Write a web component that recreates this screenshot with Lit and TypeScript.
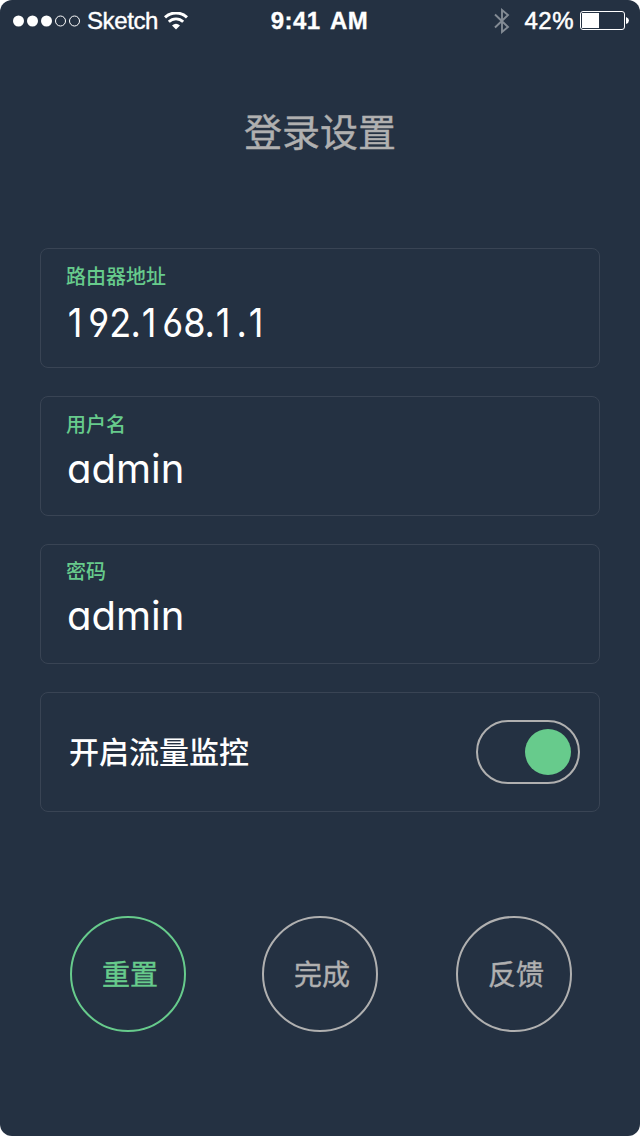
import { LitElement, html, css, svg } from "lit";
import { customElement, property, state } from "lit/decorators.js";
import { classMap } from "lit/directives/class-map.js";

@customElement("status-bar")
class StatusBar extends LitElement {
  static styles = css`
    :host {
      display: grid;
      grid-template-columns: 1fr auto 1fr;
      height: 41px;
      align-items: center;
      box-sizing: border-box;
      padding: 0 11px 0 12px;
      color: #fff;
      font: 24px/40px "Liberation Sans", Arial, sans-serif;
    }
    svg { display: block; flex: none; }
    .side { display: flex; align-items: center; }
    .right { justify-content: flex-end; }
    .carrier { margin-left: 6px; letter-spacing: -0.4px; -webkit-text-stroke: 0.4px #fff; }
    .wifi { margin-left: 6px; }
    .time { padding-right: 2px; font-weight: 700; letter-spacing: 0.5px; word-spacing: 3px; -webkit-text-stroke: 0.3px #fff; }
    .level { margin: 0 6px 0 14px; letter-spacing: 0.5px; -webkit-text-stroke: 0.5px #fff; }
  `;
  render() {
    return html`
      <div class="side">
        <svg width="69" height="12" viewBox="0 0 69 12">
          ${[0, 1, 2, 3, 4].map((i) =>
            i < 3
              ? svg`<circle cx=${6.5 + i * 14} cy="6" r="5.5" fill="#fff" />`
              : svg`<circle cx=${6.5 + i * 14} cy="6" r="5" fill="none" stroke="#fff" />`
          )}
        </svg>
        <span class="carrier">Sketch</span>
        <svg class="wifi" width="24" height="18" viewBox="0 0 24 18">
          <path d="M1 5.4 A16 16 0 0 1 23 5.4" fill="none" stroke="#fff" stroke-width="3" />
          <path d="M4.8 9.8 A10.2 10.2 0 0 1 19.2 9.8" fill="none" stroke="#fff" stroke-width="2.8" />
          <path d="M8 13.4 Q12 10 16 13.4 L12 17.5Z" fill="#fff" />
        </svg>
      </div>
      <span class="time">9:41 AM</span>
      <div class="side right">
        <svg width="16" height="26" viewBox="0 0 16 26">
          <path d="M1 6.5 L14 19 L8 24 V2 L14 7 L1 19.5" fill="none" stroke="#838b94" stroke-width="1.9" />
        </svg>
        <span class="level">42%</span>
        <svg width="49" height="19" viewBox="0 0 49 19">
          <rect x="0.5" y="0.5" width="44" height="18" rx="2.5" fill="none" stroke="#fff" />
          <rect x="2" y="2" width="17" height="15" fill="#fff" />
          <path d="M46 6 Q49 7.2 49 9.5 T46 13Z" fill="#fff" />
        </svg>
      </div>
    `;
  }
}

@customElement("setting-field")
class SettingField extends LitElement {
  @property() label = "";
  @property() value = "";
  static styles = css`
    :host {
      display: flex;
      flex-direction: column;
      box-sizing: border-box;
      height: 120px;
      padding: 12px 25px 0;
      border: 1px solid #394454;
      border-radius: 8px;
    }
    :host(.raised) { padding-top: 11px; }
    .label {
      font: 500 20px/30px "Noto Sans CJK SC", sans-serif;
      color: #67cb8c;
    }
    .value {
      margin: 6px 0 0 1px;
      font: 400 40px/48px Inter, "Noto Sans CJK SC", sans-serif;
      font-feature-settings: "cv11";
      color: #fff;
    }
    .numeric {
      display: flex;
      margin: 8px 0 0 1px;
      font-feature-settings: "cv03", "cv04", "ss01";
    }
    .cell { display: flex; flex: none; justify-content: center; width: 21.1px; }
    .cell span { transform: scaleX(0.9); }
    .dot { width: 11px; }
    .one { box-sizing: border-box; padding-right: 5px; }
  `;
  render() {
    const numeric = /^[\d.]+$/.test(this.value);
    const text = numeric
      ? [...this.value].map(
          (c) =>
            html`<span class=${classMap({ cell: true, dot: c === ".", one: c === "1" })}
              ><span>${c}</span></span
            >`
        )
      : this.value;
    return html`
      <div class="label">${this.label}</div>
      <div class=${classMap({ value: true, numeric })}>${text}</div>
    `;
  }
}

@customElement("app-root")
class AppRoot extends LitElement {
  @state() monitoring = true;
  static styles = css`
    :host { display: block; background: #fff; }
    .screen {
      box-sizing: border-box;
      height: 1136px;
      border-radius: 12px;
      overflow: hidden;
      background: #243142;
      color: #b0b0b0;
      font-family: "Noto Sans CJK SC", sans-serif;
    }
    h1 {
      margin: 61px 0 90px;
      text-align: center;
      font-size: 38px;
      font-weight: 400;
      line-height: 56px;
      -webkit-text-stroke: 0.4px currentColor;
    }
    .list { display: grid; gap: 28px; padding: 0 40px; }
    .row {
      display: flex;
      align-items: center;
      justify-content: space-between;
      box-sizing: border-box;
      height: 120px;
      padding: 0 19px 0 28px;
      border: 1px solid #394454;
      border-radius: 8px;
    }
    .row-label { padding-bottom: 4px; font-size: 30px; font-weight: 500; line-height: 44px; color: #fff; }
    button { font-family: inherit; background: none; color: inherit; box-sizing: border-box; }
    .switch {
      display: flex;
      align-items: center;
      width: 104px;
      height: 64px;
      padding: 0 7px;
      border: 2px solid #b0b0b0;
      border-radius: 32px;
    }
    .switch.on { justify-content: flex-end; }
    .knob { width: 46px; height: 46px; border-radius: 50%; background: #67cb8c; }
    .actions { display: grid; grid-template-columns: 192px 194px 116px; padding: 104px 0 0 70px; }
    .action {
      width: 116px;
      height: 116px;
      padding: 0 0 3px 4px;
      border: 2px solid currentColor;
      border-radius: 50%;
      font-size: 28px;
      line-height: 40px;
      -webkit-text-stroke: 0.4px currentColor;
    }
    .primary { color: #67cb8c; }
  `;
  render() {
    return html`
      <main class="screen">
        <status-bar></status-bar>
        <h1>登录设置</h1>
        <div class="list">
          <setting-field label="路由器地址" value="192.168.1.1"></setting-field>
          <setting-field label="用户名" value="admin"></setting-field>
          <setting-field class="raised" label="密码" value="admin"></setting-field>
          <div class="row">
            <span class="row-label">开启流量监控</span>
            <button
              class=${classMap({ switch: true, on: this.monitoring })}
              @click=${() => (this.monitoring = !this.monitoring)}
            ><span class="knob"></span></button>
          </div>
        </div>
        <div class="actions">
          <button class="action primary">重置</button>
          <button class="action">完成</button>
          <button class="action">反馈</button>
        </div>
      </main>
    `;
  }
}
